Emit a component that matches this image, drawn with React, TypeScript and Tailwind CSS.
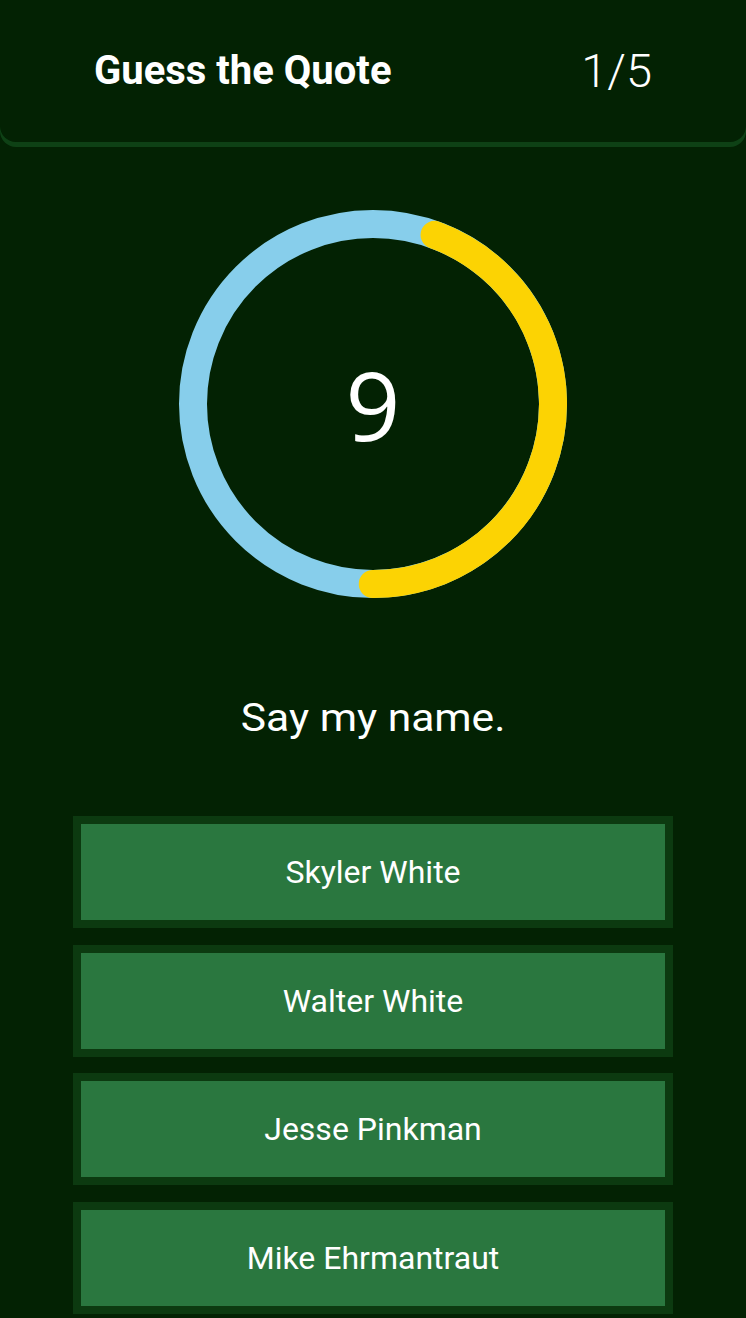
import React from "react";

const answers = ["Skyler White", "Walter White", "Jesse Pinkman", "Mike Ehrmantraut"];

function Timer({ left, total }: { left: number; total: number }) {
  const r = 180;
  const c = 2 * Math.PI * r;
  const frac = left / total;
  const arc = frac * c;
  // arc ends at the bottom of the ring
  const start = 180 - frac * 360 - 90;
  return (
    <div className="relative w-[388px] h-[388px]">
      <svg width="388" height="388" viewBox="0 0 388 388">
        <circle cx="194" cy="194" r={r} fill="none" stroke="#87ceeb" strokeWidth="28" />
        <circle
          cx="194"
          cy="194"
          r={r}
          fill="none"
          stroke="#fcd303"
          strokeWidth="28"
          strokeLinecap="round"
          strokeDasharray={`${arc} ${c}`}
          transform={`rotate(${start} 194 194)`}
        />
      </svg>
      <div className="absolute inset-0 flex items-center justify-center">
        <span className="text-white text-[96px] leading-none font-['Open_Sans',sans-serif] font-normal">
          {left}
        </span>
      </div>
    </div>
  );
}

export default function App() {
  return (
    <div className="min-h-[1318px] bg-[#032203] font-['Roboto',sans-serif] text-white">
      <header className="h-[142px] rounded-b-2xl shadow-[0_5px_0_#0e4115] flex items-center justify-between pl-[94px] pr-[94px]">
        <h1 className="text-[40px] font-bold">Guess the Quote</h1>
        <span className="text-[47px] font-light">1/5</span>
      </header>

      <div className="flex justify-center mt-[68px]">
        <Timer left={9} total={20.25} />
      </div>

      <div className="flex justify-center mt-[98px]">
        <p className="text-[38px] leading-[44px] scale-x-[1.12]">Say my name.</p>
      </div>

      <div className="flex flex-col items-center gap-[16.67px] mt-[76px]">
        {answers.map((a) => (
          <button
            key={a}
            className="w-[600px] h-[112px] border-8 border-[#0c3a10] bg-[#2a773f] text-white text-[32px]"
          >
            {a}
          </button>
        ))}
      </div>
    </div>
  );
}
